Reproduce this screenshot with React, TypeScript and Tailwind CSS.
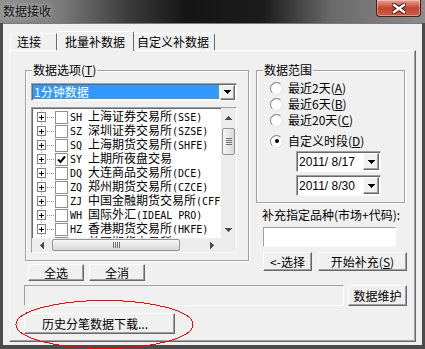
import React from 'react'

type Item = { code: string; name: string; checked?: boolean }

const items: Item[] = [
  { code: 'SH', name: '上海证券交易所(SSE)' },
  { code: 'SZ', name: '深圳证券交易所(SZSE)' },
  { code: 'SQ', name: '上海期货交易所(SHFE)' },
  { code: 'SY', name: '上期所夜盘交易', checked: true },
  { code: 'DQ', name: '大连商品交易所(DCE)' },
  { code: 'ZQ', name: '郑州期货交易所(CZCE)' },
  { code: 'ZJ', name: '中国金融期货交易所(CFFEX)' },
  { code: 'WH', name: '国际外汇(IDEAL PRO)' },
  { code: 'HZ', name: '香港期货交易所(HKFE)' },
  { code: 'MG', name: '美国期货交易所(CME)' },
]

const raised =
  'border border-t-white border-l-white border-r-[#696969] border-b-[#696969] shadow-[inset_-1px_-1px_0_#a0a0a0] bg-[#f0f0f0]'
const sunken = 'border border-t-[#a0a0a0] border-l-[#a0a0a0] border-r-white border-b-white'
const mono = "font-['DejaVu_Sans_Mono',monospace] text-[10px]"

// ascii runs in a narrow mono face, like the old bitmap font
function Mixed({ text }: { text: string }) {
  const parts = text.match(/[\x20-\x7e]+|[^\x20-\x7e]+/g) ?? []
  return (
    <>
      {parts.map((p, i) =>
        /^[\x20-\x7e]/.test(p) ? (
          <span key={i} className={mono}>
            {p}
          </span>
        ) : (
          <span key={i}>{p}</span>
        )
      )}
    </>
  )
}

function DownGlyph({ color = '#000' }: { color?: string }) {
  return (
    <svg width="7" height="4" shapeRendering="crispEdges">
      <polygon points="0,0 7,0 3.5,4" fill={color} />
    </svg>
  )
}

function GroupBox({ label, className, children }: { label: React.ReactNode; className: string; children: React.ReactNode }) {
  return (
    <div className={`relative border border-[#a0a0a0] shadow-[inset_1px_1px_0_#fff,1px_1px_0_#fff] ${className}`}>
      <div className="absolute -top-[8px] left-[6px] bg-[#f0f0f0] px-[1px]">{label}</div>
      {children}
    </div>
  )
}

function Radio({ checked, children }: { checked?: boolean; children: React.ReactNode }) {
  return (
    <div className="flex h-[16px] items-center gap-[5px]">
      <div className="flex h-[13px] w-[13px] shrink-0 items-center justify-center rounded-full border border-t-[#808080] border-l-[#808080] border-r-[#e3e3e3] border-b-[#e3e3e3] bg-white">
        {checked && <div className="h-[4px] w-[4px] rounded-full bg-black" />}
      </div>
      <span className="whitespace-nowrap">{children}</span>
    </div>
  )
}

function DateCombo({ value }: { value: string }) {
  return (
    <div className={`flex h-[21px] w-[85px] items-center bg-white ${sunken} shadow-[inset_1px_1px_0_#696969]`}>
      <span className="pl-[2px] font-['Liberation_Sans',sans-serif] text-[12px] whitespace-pre">{value}</span>
      <div className={`ml-auto mr-[1px] flex h-[17px] w-[16px] shrink-0 items-center justify-center ${raised}`}>
        <DownGlyph />
      </div>
    </div>
  )
}

function TreeRow({ item }: { item: Item }) {
  return (
    <div className="flex h-[14px] items-center pl-[5px]">
      <svg className="shrink-0" width="18" height="14" shapeRendering="crispEdges">
        <line x1="4.5" y1="0" x2="4.5" y2="2" stroke="#a0a0a0" strokeDasharray="1 1" />
        <line x1="4.5" y1="12" x2="4.5" y2="14" stroke="#a0a0a0" strokeDasharray="1 1" />
        <rect x="0.5" y="2.5" width="8" height="9" fill="#fff" stroke="#828282" />
        <line x1="2" y1="7.5" x2="7" y2="7.5" stroke="#000" />
        <line x1="4.5" y1="5" x2="4.5" y2="10" stroke="#000" />
        <line x1="10" y1="7.5" x2="17" y2="7.5" stroke="#909090" strokeDasharray="1 1" />
      </svg>
      <div className="flex h-[13px] w-[13px] shrink-0 items-center justify-center border border-[#8e8f8f] bg-white">
        {item.checked && (
          <svg width="9" height="9">
            <path d="M1 4.5 L3.5 7 L8 1.5" stroke="#000" strokeWidth="2" fill="none" />
          </svg>
        )}
      </div>
      <span className="ml-[2px] shrink-0 whitespace-pre">
        <Mixed text={`${item.code} ${item.name}`} />
      </span>
    </div>
  )
}

function TreeList() {
  return (
    <div className={`mt-[6px] flex h-[146px] w-[206px] flex-col bg-white ${sunken} shadow-[inset_1px_1px_0_#696969]`}>
      <div className="flex min-h-0 flex-1">
        <div className="min-w-0 flex-1 overflow-hidden pt-[2px]">
          {items.map((it) => (
            <TreeRow key={it.code} item={it} />
          ))}
        </div>
        {/* vertical scrollbar */}
        <div className="flex w-[15px] shrink-0 flex-col items-center bg-[#ececec]">
          <div className="flex h-[19px] items-center justify-center">
            <svg width="7" height="4" shapeRendering="crispEdges">
              <polygon points="3.5,0 7,4 0,4" fill="#4d4d4d" />
            </svg>
          </div>
          <div className="mt-[1px] flex h-[27px] w-[13px] flex-col items-center justify-center gap-[1px] rounded-[2px] border border-[#959595] bg-linear-to-r from-[#f6f6f6] to-[#d8d8d8]">
            <span className="h-[1px] w-[6px] bg-[#6e6e6e]" />
            <span className="h-[1px] w-[6px] bg-[#6e6e6e]" />
            <span className="h-[1px] w-[6px] bg-[#6e6e6e]" />
            <span className="h-[1px] w-[6px] bg-[#6e6e6e]" />
          </div>
          <div className="flex-1" />
          <div className="flex h-[17px] items-center justify-center">
            <DownGlyph color="#4d4d4d" />
          </div>
        </div>
      </div>
      {/* horizontal scrollbar */}
      <div className="flex h-[14px] shrink-0">
        <div className="flex flex-1 items-center bg-[#ececec]">
          <div className="flex h-full w-[19px] items-center justify-center">
            <svg width="4" height="7" shapeRendering="crispEdges">
              <polygon points="4,0 4,7 0,3.5" fill="#4d4d4d" />
            </svg>
          </div>
          <div className="ml-[1px] flex h-[12px] w-[128px] items-center justify-center gap-[1px] rounded-[2px] border border-[#959595] bg-linear-to-b from-[#f6f6f6] to-[#d8d8d8]">
            <span className="h-[6px] w-[1px] bg-[#6e6e6e]" />
            <span className="h-[6px] w-[1px] bg-[#6e6e6e]" />
            <span className="h-[6px] w-[1px] bg-[#6e6e6e]" />
            <span className="h-[6px] w-[1px] bg-[#6e6e6e]" />
          </div>
          <div className="flex-1" />
          <div className="flex h-full w-[19px] items-center justify-center">
            <svg width="4" height="7" shapeRendering="crispEdges">
              <polygon points="0,0 4,3.5 0,7" fill="#4d4d4d" />
            </svg>
          </div>
        </div>
        <div className="w-[15px] bg-[#ececec]" />
      </div>
    </div>
  )
}

function TitleBar() {
  return (
    <div className="flex h-[23px] items-start justify-between bg-[linear-gradient(90deg,#8e8e8e_0%,#7c7c7c_14%,#3c3c3c_30%,#151515_44%,#1c1c1c_62%,#6a6a6a_78%,#8c8c8c_100%)]">
      <span className="pl-[3px] pt-[4px] text-[12px] text-[#111] [text-shadow:0_0_6px_rgba(255,255,255,0.7)]">数据接收</span>
      <div className="mr-[4px] flex h-[17px] w-[45px] items-center justify-center rounded-b-[4px] border border-t-0 border-[#4e1a12] bg-linear-to-b from-[#e6a193] via-[#c24530] to-[#cf5f47] shadow-[inset_0_0_0_1px_rgba(255,255,255,0.35)]">
        <svg width="14" height="11">
          <path d="M2 2 L12 9 M12 2 L2 9" stroke="#3b1510" strokeWidth="4.5" strokeLinecap="square" />
          <path d="M2 2 L12 9 M12 2 L2 9" stroke="#fff" strokeWidth="2.5" strokeLinecap="square" />
        </svg>
      </div>
    </div>
  )
}

export default function App() {
  return (
    <div className="relative flex h-[349px] w-[425px] flex-col overflow-hidden bg-[#4b4b4b] font-['Noto_Sans_CJK_SC','Liberation_Sans',sans-serif] text-[12px] leading-[14px] text-black">
      <TitleBar />

      <div className="mx-[3px] mb-[4px] flex flex-1 flex-col border-t border-[#7a7a7a] bg-[#f0f0f0] pt-[7px]">
        {/* tab headers */}
        <div className="ml-[7px] flex h-[19px] items-end">
          <div className="flex h-[17px] w-[47px] items-center rounded-tl-[2px] border-t border-l border-r border-t-white border-l-white border-r-[#696969] pl-[6px]">
            连接
          </div>
          <div className="relative z-10 -mb-px flex h-[20px] w-[77px] items-center rounded-t-[2px] border-t border-l border-r border-t-white border-l-white border-r-[#696969] bg-[#f0f0f0] pl-[7px]">
            批量补数据
          </div>
          <div className="flex h-[17px] w-[81px] items-center rounded-tr-[2px] border-t border-r border-t-white border-r-[#696969] pl-[3px]">
            自定义补数据
          </div>
        </div>

        {/* tab page */}
        <div className="ml-[6px] h-[292px] w-[407px] border border-t-white border-l-white border-r-[#696969] border-b-[#696969] shadow-[inset_-1px_-1px_0_#a0a0a0] pl-[15px] pt-[19px]">
          <div className="flex items-start">
            {/* left column */}
            <div className="w-[224px]">
              <GroupBox
                className="h-[191px] px-[5px] pt-[12px]"
                label={
                  <span>
                    数据选项(<u>T</u>)
                  </span>
                }
              >
                <div className={`flex h-[18px] w-[206px] items-center bg-white ${sunken} shadow-[inset_1px_1px_0_#696969]`}>
                  <div className="ml-[1px] flex h-[14px] flex-1 items-center bg-[#3399ff] pl-[1px] text-white">1分钟数据</div>
                  <div className={`ml-[1px] mr-[1px] flex h-[15px] w-[15px] items-center justify-center ${raised}`}>
                    <DownGlyph />
                  </div>
                </div>
                <TreeList />
              </GroupBox>
              <div className="mt-[3px] flex gap-[5px] pl-[3px]">
                <button className={`h-[17px] w-[56px] leading-[14px] ${raised}`}>全选</button>
                <button className={`h-[17px] w-[56px] leading-[14px] ${raised}`}>全消</button>
              </div>
            </div>

            {/* right column */}
            <div className="ml-[7px] w-[151px]">
              <GroupBox className="h-[133px] w-[149px] pl-[13px] pt-[9px]" label="数据范围">
                <Radio>
                  最近2天(<u>A</u>)
                </Radio>
                <Radio>
                  最近6天(<u>B</u>)
                </Radio>
                <Radio>
                  最近20天(<u>C</u>)
                </Radio>
                <div className="mt-[5px]">
                  <Radio checked>
                    自定义时段(<u>D</u>)
                  </Radio>
                </div>
                <div className="ml-[26px] mt-[2px] flex flex-col gap-[3px]">
                  <DateCombo value="2011/ 8/17" />
                  <DateCombo value="2011/ 8/30" />
                </div>
              </GroupBox>
              <div className="mt-[5px] h-[14px] pl-[6px] whitespace-nowrap">补充指定品种(市场+代码):</div>
              <div className={`ml-[7px] mt-[5px] h-[20px] w-[133px] bg-white ${sunken}`} />
              <div className="ml-[7px] mt-[5px] flex gap-[6px]">
                <button className={`h-[19px] w-[49px] leading-[14px] ${raised}`}>&lt;-选择</button>
                <button className={`h-[19px] w-[89px] leading-[14px] ${raised}`}>
                  开始补充(<u>S</u>)
                </button>
              </div>
            </div>
          </div>

          <div className="-ml-px mt-[4px] flex">
            <div className={`h-[21px] w-[320px] ${sunken}`} />
            <button className={`ml-[4px] h-[21px] w-[59px] leading-[14px] ${raised}`}>数据维护</button>
          </div>

          <div className="-ml-px mt-[7px]">
            <button className={`flex h-[21px] w-[151px] items-center pl-[17px] leading-[14px] ${raised}`}>
              历史分笔数据下载...
            </button>
          </div>
        </div>
      </div>

      {/* red annotation ring */}
      <svg className="pointer-events-none absolute left-0 top-0" width="425" height="349" shapeRendering="crispEdges">
        <ellipse cx="104.5" cy="324.5" rx="88.5" ry="24" fill="none" stroke="#ff0000" strokeWidth="1" />
      </svg>
    </div>
  )
}
